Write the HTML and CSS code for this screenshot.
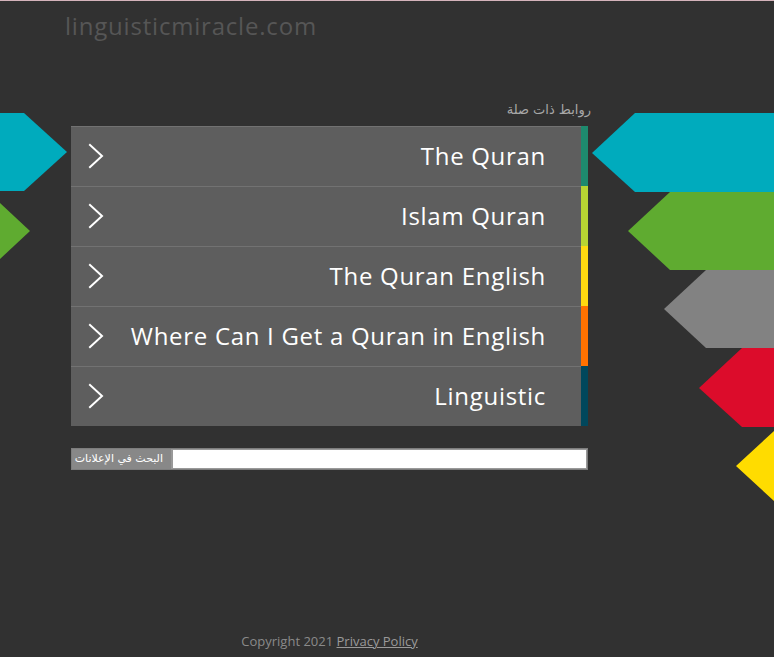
FILE: index.html
```html
<!DOCTYPE html>
<html lang="en">
<head>
<meta charset="utf-8">
<title>linguisticmiracle.com</title>
<link rel="stylesheet" href="styles.css">
</head>
<body>
<svg class="arrows" width="774" height="657" viewBox="0 0 774 657" aria-hidden="true">
  <!-- left side -->
  <polygon fill="#00abbd" points="0,112 24,112 67,151 24,190 0,190"/>
  <polygon fill="#5fab30" points="-14,202 0,202 30,230 0,258 -14,258"/>
  <!-- right side -->
  <polygon fill="#00abbd" points="774,112 635,112 592,152 635,191 774,191"/>
  <polygon fill="#5fab30" points="774,191 670,191 628,230 670,269 774,269"/>
  <polygon fill="#828282" points="774,269 706,269 664,308 706,347 774,347"/>
  <polygon fill="#dc0c2b" points="774,347 742,347 699,387 742,426 774,426"/>
  <polygon fill="#ffdc00" points="774,429 775,429 736,465 775,501 774,501"/>
</svg>

<header class="site-header">
  <span class="domain">linguisticmiracle.com</span>
</header>

<main class="content">
  <div class="related-title" dir="rtl">روابط ذات صلة</div>
  <ul class="links">
    <li class="link-row bar-teal"><a href="#"><svg class="chev" viewBox="0 0 16 26"><polyline points="2,2 14,13 2,24"/></svg><span>The Quran</span></a></li>
    <li class="link-row bar-lime"><a href="#"><svg class="chev" viewBox="0 0 16 26"><polyline points="2,2 14,13 2,24"/></svg><span>Islam Quran</span></a></li>
    <li class="link-row bar-yellow"><a href="#"><svg class="chev" viewBox="0 0 16 26"><polyline points="2,2 14,13 2,24"/></svg><span>The Quran English</span></a></li>
    <li class="link-row bar-orange"><a href="#"><svg class="chev" viewBox="0 0 16 26"><polyline points="2,2 14,13 2,24"/></svg><span>Where Can I Get a Quran in English</span></a></li>
    <li class="link-row bar-navy"><a href="#"><svg class="chev" viewBox="0 0 16 26"><polyline points="2,2 14,13 2,24"/></svg><span>Linguistic</span></a></li>
  </ul>

  <form class="search">
    <label class="search-label" dir="rtl">البحث في الإعلانات</label>
    <input class="search-input" type="text">
  </form>

  <footer class="site-footer">
    Copyright 2021 <a href="#">Privacy Policy</a>
  </footer>
</main>
</body>
</html>
```

FILE: styles.css
```css
html, body {
  margin: 0;
  padding: 0;
}

body {
  background: #313131;
  border-top: 1px solid #d4b3bb;
  height: 656px;
  position: relative;
  overflow: hidden;
  font-family: "Open Sans", "Liberation Sans", sans-serif;
}

.arrows {
  position: absolute;
  left: 0;
  top: 0;
  z-index: 0;
}

.site-header {
  position: relative;
  padding: 8px 0 0 65px;
  height: 34px;
}

.domain {
  font-size: 24px;
  line-height: 34px;
  color: #565656;
  letter-spacing: 0.8px;
}

.content {
  position: relative;
  z-index: 1;
  width: 517px;
  margin: 58px 0 0 71px;
}

.related-title {
  font-family: "DejaVu Sans", "Liberation Sans", sans-serif;
  font-size: 13px;
  line-height: 18px;
  color: #a8a8a8;
  text-align: right;
  margin-right: -3px;
  margin-bottom: 7px;
}

.links {
  list-style: none;
  margin: 0;
  padding: 0;
}

.link-row {
  display: flex;
  height: 60px;
  border-right: 7px solid #1e8a6e;
}

.bar-teal { border-right-color: #1e8a6e; }
.bar-lime { border-right-color: #b8d433; }
.bar-yellow { border-right-color: #ffd910; }
.bar-orange { border-right-color: #ff7200; }
.bar-navy { border-right-color: #01475c; }

.link-row a {
  flex: 1;
  display: flex;
  align-items: center;
  justify-content: space-between;
  background: #5e5e5e;
  border-top: 1px solid #727272;
  padding: 0 35px 2px 17px;
  color: #fff;
  text-decoration: none;
  font-size: 24px;
  letter-spacing: 0.7px;
}

.chev {
  width: 16px;
  height: 26px;
  fill: none;
  stroke: #fff;
  stroke-width: 2;
  stroke-linecap: square;
}

.search {
  display: flex;
  height: 22px;
  margin-top: 22px;
  background: #7d7d7d;
  padding: 1px;
  box-sizing: border-box;
}

.search-label {
  width: 99px;
  background: #888;
  color: #fff;
  font-family: "DejaVu Sans", "Liberation Sans", sans-serif;
  font-size: 11px;
  line-height: 20px;
  padding-right: 8px;
  box-sizing: border-box;
  text-align: right;
}

.search-input {
  flex: 1;
  border: 1px solid #999;
  border-left-width: 2px;
  background: #fff;
  margin: 0;
  padding: 0;
  outline: none;
}

.site-footer {
  margin-top: 162px;
  text-align: center;
  font-size: 13px;
  color: #8a8a8a;
}

.site-footer a {
  color: #9a9a9a;
}
```
